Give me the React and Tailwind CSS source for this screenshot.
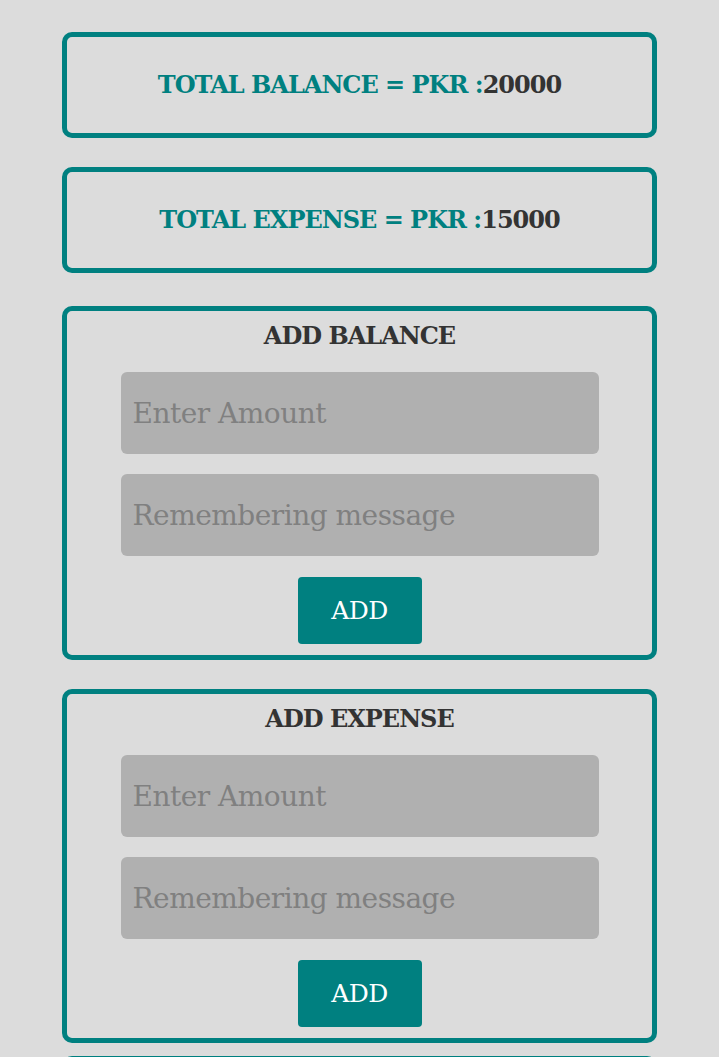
import { useState } from "react";

const serif = "font-['DejaVu_Serif',serif]";

function TotalCard({ label, amount }) {
  return (
    <div className="h-[106px] rounded-[10px] border-[5px] border-[#008080] flex items-center justify-center">
      <p className={`${serif} text-[24px] font-bold tracking-[-1px] text-[#008080]`}>
        {label} = PKR :<span className="text-[#333333]">{amount}</span>
      </p>
    </div>
  );
}

function AddCard({ title, onAdd }) {
  const [amount, setAmount] = useState("");
  const [message, setMessage] = useState("");

  return (
    <div className="rounded-[10px] border-[5px] border-[#008080] pt-[7px] pb-[11px] flex flex-col items-center">
      <h2 className={`${serif} text-[24px] font-bold tracking-[-1px] text-[#333333] leading-[36px]`}>{title}</h2>
      <div className="w-[478px] mt-[18px] flex flex-col gap-[20px]">
        <input
          value={amount}
          onChange={(e) => setAmount(e.target.value)}
          placeholder="Enter Amount"
          className={`${serif} h-[82px] w-full rounded-[6px] bg-[#b0b0b0] px-[12px] text-[28px] tracking-[-0.5px] text-[#333333] placeholder:text-[#808080] outline-none`}
        />
        <input
          value={message}
          onChange={(e) => setMessage(e.target.value)}
          placeholder="Remembering message"
          className={`${serif} h-[82px] w-full rounded-[6px] bg-[#b0b0b0] px-[12px] text-[28px] tracking-[-0.5px] text-[#333333] placeholder:text-[#808080] outline-none`}
        />
      </div>
      <button
        onClick={() => onAdd && onAdd(amount, message)}
        className={`${serif} mt-[21px] h-[67px] w-[124px] rounded-[4px] bg-[#008080] text-[25px] tracking-[-0.5px] text-white`}
      >
        ADD
      </button>
    </div>
  );
}

export default function App() {
  return (
    <div className="min-h-screen bg-[#dcdcdc] px-[62px] pt-[32px] pb-8 overflow-hidden">
      <TotalCard label="TOTAL BALANCE" amount="20000" />
      <div className="mt-[29px]">
        <TotalCard label="TOTAL EXPENSE" amount="15000" />
      </div>
      <div className="mt-[33px]">
        <AddCard title="ADD BALANCE" />
      </div>
      <div className="mt-[29px]">
        <AddCard title="ADD EXPENSE" />
      </div>
      <div className="mt-[13px] h-[120px] rounded-[10px] border-[5px] border-[#008080]" />
    </div>
  );
}
